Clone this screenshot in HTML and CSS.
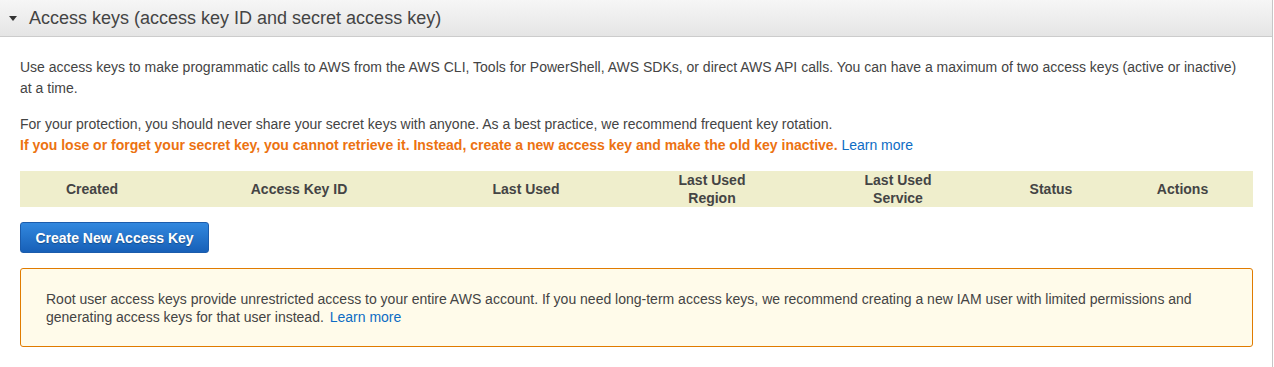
FILE: index.html
```html
<!DOCTYPE html>
<html>
<head>
    <meta charset="utf-8">
    <title>Access keys</title>
    <link rel="stylesheet" href="styles.css">
</head>
<body>
    <div class="panel">
        <div class="panel__header">
            <span class="panel__caret"></span>
            <h2 class="panel__title">Access keys (access key ID and secret access key)</h2>
        </div>
        <div class="panel__body">
            <p class="panel__text panel__text--intro">Use access keys to make programmatic calls to AWS from the AWS CLI, Tools for PowerShell, AWS SDKs, or direct AWS API calls. You can have a maximum of two access keys (active or inactive) at a time.</p>
            <p class="panel__text">For your protection, you should never share your secret keys with anyone. As a best practice, we recommend frequent key rotation.<br>
                <strong class="panel__warning">If you lose or forget your secret key, you cannot retrieve it. Instead, create a new access key and make the old key inactive.</strong> <a class="link" href="#">Learn more</a></p>
            <table class="keys">
                <thead>
                    <tr>
                        <th class="keys__created">Created</th>
                        <th class="keys__id">Access Key ID</th>
                        <th class="keys__used">Last Used</th>
                        <th class="keys__region">Last Used<br>Region</th>
                        <th class="keys__service">Last Used<br>Service</th>
                        <th class="keys__status">Status</th>
                        <th>Actions</th>
                    </tr>
                </thead>
            </table>
            <button class="button" type="button">Create New Access Key</button>
            <div class="alert">
                <span>Root user access keys provide unrestricted access to your entire AWS account. If you need long-term access keys, we recommend creating a new IAM user with limited permissions and generating access keys for that user instead.</span>
                <a class="link alert__link" href="#">Learn more</a>
            </div>
        </div>
    </div>
</body>
</html>
```

FILE: styles.css
```css
body {
    margin: 0;
    background: #ffffff;
    font: 14px 'Liberation Sans', Arial, sans-serif;
    color: #444444;
}

.panel {
    width: 1273px;
    height: 367px;
    box-sizing: border-box;
    border-right: 1px solid #c6c6c6;
}

.panel__header {
    display: flex;
    align-items: center;
    height: 36px;
    border-bottom: 1px solid #cccccc;
    background: linear-gradient(#f6f6f6, #e5e5e5);
}

.panel__caret {
    width: 0;
    height: 0;
    margin: 1px 12px 0 9px;
    border-left: 4.5px solid transparent;
    border-right: 4.5px solid transparent;
    border-top: 5px solid #333333;
}

.panel__title {
    margin: 0;
    font-size: 18px;
    font-weight: normal;
    color: #444444;
}

.panel__body {
    padding: 20px 19px 0 20px;
}

.panel__text {
    margin: 0 0 15px;
    line-height: 21px;
}

.panel__text--intro {
    max-width: 1225px;
}

.panel__warning {
    color: #ec7211;
}

.link {
    color: #0d6cc4;
    text-decoration: none;
}

.keys {
    width: 1233px;
    margin-bottom: 15px;
    border-collapse: collapse;
    table-layout: fixed;
    background: #efeecc;
}

.keys th {
    height: 36px;
    padding: 0;
    font-size: 14px;
    line-height: 18px;
    color: #444444;
    text-align: center;
}

.keys__created { width: 144px; }
.keys__id { width: 270px; }
.keys__used { width: 184px; }
.keys__region { width: 188px; }
.keys__service { width: 184px; }
.keys__status { width: 122px; }

.button {
    display: block;
    width: 189px;
    height: 31px;
    padding: 0;
    margin-bottom: 15px;
    font: bold 14px 'Liberation Sans', Arial, sans-serif;
    color: #ffffff;
    text-shadow: 0 1px 1px rgba(0, 0, 0, 0.3);
    border: 1px solid #1b5cac;
    border-radius: 3px;
    background: linear-gradient(#3288de, #1760b8);
    cursor: pointer;
}

.alert {
    padding: 21px 26px 20px 25px;
    line-height: 18px;
    border: 1px solid #e07b00;
    border-radius: 3px;
    background: #fffbea;
}

.alert__link {
    margin-left: 2px;
}
```
